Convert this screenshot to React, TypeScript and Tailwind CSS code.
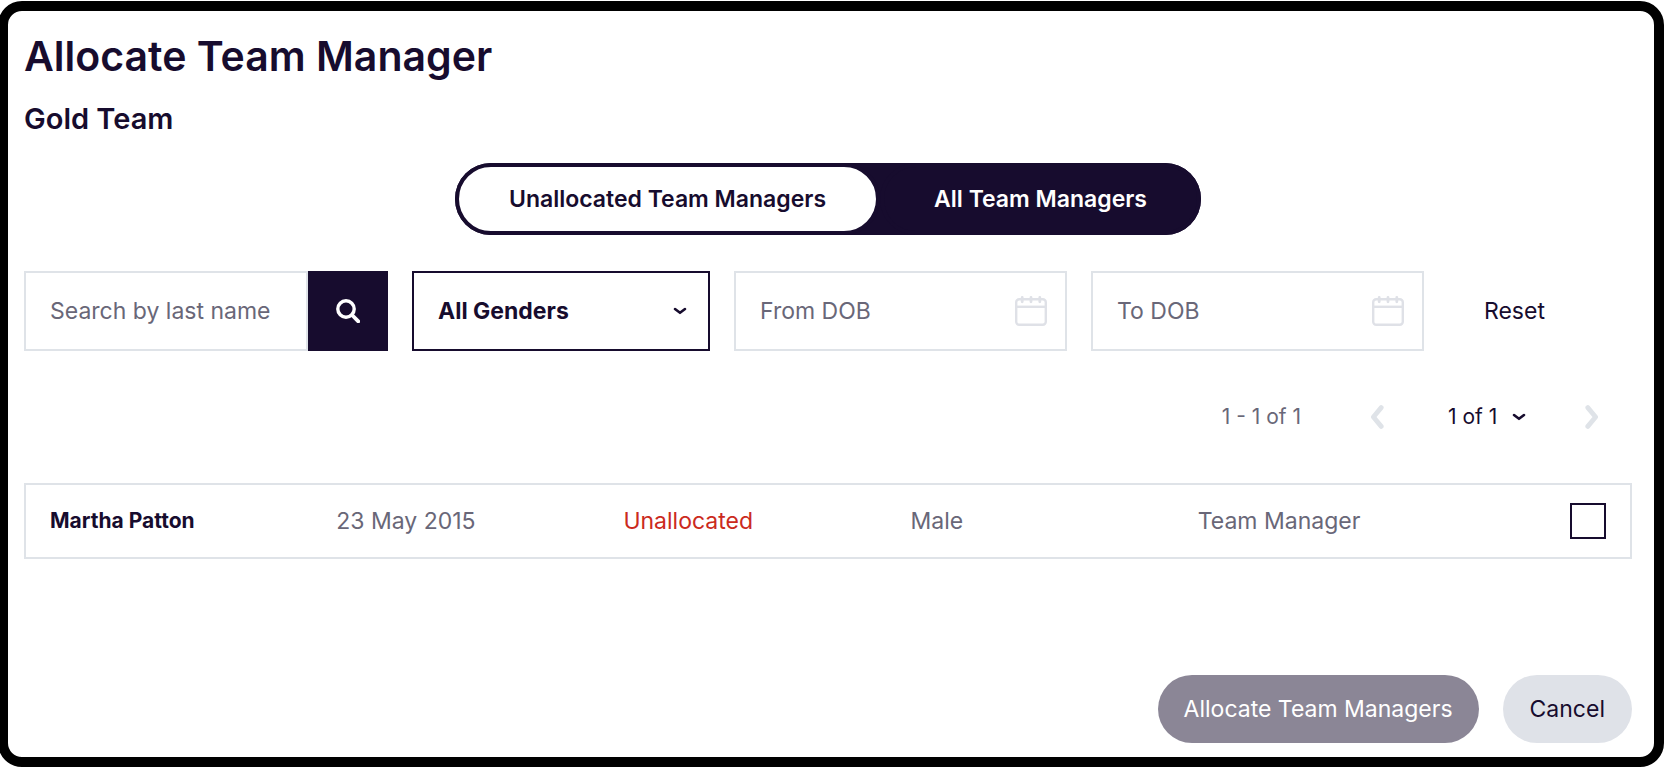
import { useState } from "react";
import clsx from "clsx";

const managers = [
  { name: "Martha Patton", dob: "23 May 2015", status: "Unallocated", gender: "Male", role: "Team Manager" },
];

const tabs = ["Unallocated Team Managers", "All Team Managers"];

const SearchIcon = () => (
  <svg width="24" height="24" viewBox="0 0 24 24" fill="none" stroke="currentColor" aria-hidden="true">
    <circle cx="10" cy="10" r="8.2" strokeWidth="3.4" />
    <path d="M16 16l6.3 6.3" strokeWidth="3.8" strokeLinecap="round" />
  </svg>
);

const CaretIcon = ({ className }: { className?: string }) => (
  <svg className={className} width="14" height="8" viewBox="0 0 14 8" fill="none" stroke="currentColor" aria-hidden="true">
    <path d="M2 2l5 3.8L12 2" strokeWidth="2.6" strokeLinecap="round" strokeLinejoin="round" />
  </svg>
);

const CalendarIcon = ({ className }: { className?: string }) => (
  <svg className={className} width="32" height="30" viewBox="0 0 32 30" fill="none" stroke="currentColor" strokeWidth="2.4" aria-hidden="true">
    <rect x="1.2" y="3.2" width="29.6" height="25.6" rx="3" />
    <path d="M1 10.8h30" />
    <path d="M7.2 1.4v4.4M16 1.4v4.4M24.8 1.4v4.4" strokeWidth="2.8" strokeLinecap="round" />
  </svg>
);

const ArrowIcon = ({ next }: { next?: boolean }) => (
  <svg width="14" height="24" viewBox="0 0 14 24" fill="none" stroke="currentColor" aria-hidden="true">
    <path d={next ? "M2.8 2.6L10.6 12l-7.8 9.4" : "M11.2 2.6L3.4 12l7.8 9.4"} strokeWidth="4.8" strokeLinecap="round" strokeLinejoin="round" />
  </svg>
);

const DateField = ({ label }: { label: string }) => (
  <div className="relative min-w-0 flex-[333]">
    <input
      type="text"
      aria-label={label}
      placeholder={label}
      className="h-20 w-full border-2 border-[#dfe3e8] bg-white pl-6 pr-16 placeholder:text-[#696778]"
    />
    <CalendarIcon className="pointer-events-none absolute right-5 top-[25px] text-[#dfe1e7]" />
  </div>
);

const App = () => {
  const [tab, setTab] = useState(0);

  return (
    <div className="bg-white">
      <main className="mt-px -ml-0.5 mr-0.5 rounded-3xl border-10 border-black bg-white pt-6 pr-[22px] pb-3.5 pl-4 font-['Inter',sans-serif] text-[23px] leading-8 text-[#170c2e]">
        <h1 className="text-[41px] font-semibold leading-[42px]">Allocate Team Manager</h1>
        <h2 className="mt-6 text-[29px] font-semibold leading-9">Gold Team</h2>

        <div className="mt-[26px] flex justify-center">
          <div className="flex h-[72px] rounded-full bg-[#170c2e]">
            {tabs.map((label, i) => (
              <button
                key={label}
                type="button"
                aria-pressed={tab === i}
                onClick={() => setTab(i)}
                className={clsx(
                  "rounded-full border-4 border-[#170c2e] px-[50px] font-semibold",
                  tab === i ? "bg-white text-[#170c2e]" : "bg-[#170c2e] text-white"
                )}
              >
                {label}
              </button>
            ))}
          </div>
        </div>

        <form className="mt-9 flex gap-6" onSubmit={(e) => e.preventDefault()}>
          <div className="flex min-w-0 flex-[364]">
            <input
              type="search"
              aria-label="Search by last name"
              placeholder="Search by last name"
              className="h-20 min-w-0 flex-1 border-2 border-[#dfe3e8] bg-white pl-6 placeholder:text-[#696778]"
            />
            <button type="submit" aria-label="Search" className="flex size-20 items-center justify-center bg-[#170c2e] text-white">
              <SearchIcon />
            </button>
          </div>
          <div className="relative min-w-0 flex-[298]">
            <select aria-label="Gender" className="h-20 w-full appearance-none border-2 border-[#170c2e] bg-white px-6 font-bold">
              <option>All Genders</option>
              <option>Female</option>
              <option>Male</option>
            </select>
            <CaretIcon className="pointer-events-none absolute right-[23px] top-9" />
          </div>
          <DateField label="From DOB" />
          <DateField label="To DOB" />
          <div className="flex flex-[184] items-center">
            <button type="reset" className="px-9">Reset</button>
          </div>
        </form>

        <nav aria-label="Pagination" className="mt-[46px] flex h-10 items-center justify-end pr-[33px] text-[21px]">
          <span className="mr-[69px] text-[#696778]">1 - 1 of 1</span>
          <button type="button" disabled aria-label="Previous page" className="text-[#dfe3e8]">
            <ArrowIcon />
          </button>
          <div className="relative ml-16 mr-[59px]">
            <select aria-label="Page" className="block appearance-none bg-white pr-7">
              <option>1 of 1</option>
            </select>
            <CaretIcon className="pointer-events-none absolute right-0 top-3" />
          </div>
          <button type="button" disabled aria-label="Next page" className="text-[#dfe3e8]">
            <ArrowIcon next />
          </button>
        </nav>

        <table className="mt-[46px] w-full table-fixed border-2 border-[#dfe3e8] text-[#696778]">
          <tbody>
            {managers.map((m) => (
              <tr key={m.name} className="h-[74px]">
                <th scope="row" className="pl-6 text-left text-[21px] font-bold text-[#170c2e]">{m.name}</th>
                <td className="pl-6">{m.dob}</td>
                <td className="pl-6 text-[#cb2a1d]">{m.status}</td>
                <td className="pl-6">{m.gender}</td>
                <td className="pl-6">{m.role}</td>
                <td className="w-[170px] pr-6">
                  <input
                    type="checkbox"
                    aria-label={`Select ${m.name}`}
                    className="ml-auto block size-9 appearance-none border-2 border-[#170c2e] bg-white checked:bg-[#170c2e]"
                  />
                </td>
              </tr>
            ))}
          </tbody>
        </table>

        <div className="mt-[116px] flex justify-end gap-6">
          <button type="button" disabled className="h-[68px] rounded-full bg-[#8b8696] px-[26px] text-white">
            Allocate Team Managers
          </button>
          <button type="button" className="h-[68px] rounded-full bg-[#dfe2e8] px-[27px]">
            Cancel
          </button>
        </div>
      </main>
    </div>
  );
};

export default App;
